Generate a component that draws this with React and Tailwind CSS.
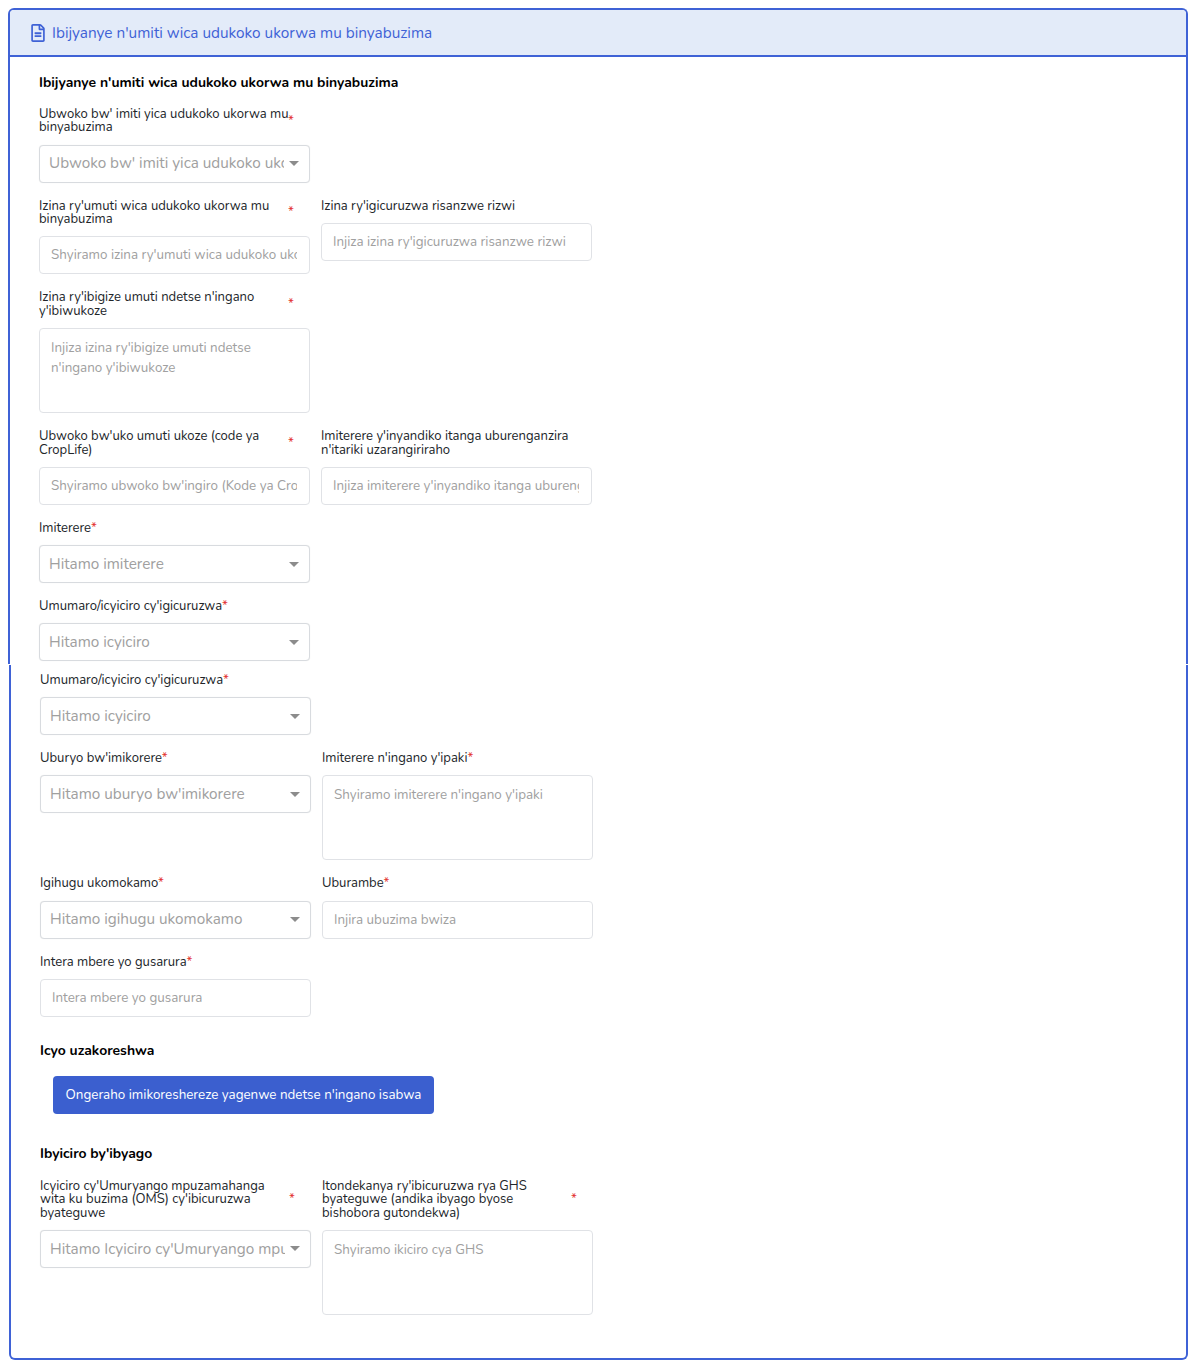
import React from "react";
import { FaRegFileAlt } from "react-icons/fa";

function Label({ text, required, inline }) {
  // short labels carry the star right after the text, long ones in a column of their own
  if (inline) {
    return (
      <div className="pt-px text-[13.05px] leading-[13.5px] text-[#212529]">
        {text}
        <span className="text-[#e3342f]">*</span>
      </div>
    );
  }
  return (
    <div className="flex items-center pt-px text-[13.05px] leading-[13.5px] text-[#212529]">
      <span className="w-[249px] whitespace-pre">{text}</span>
      {required && <span className="text-[#e3342f]">*</span>}
    </div>
  );
}

function Select({ placeholder }) {
  return (
    <div className="flex items-center h-[38px] pl-[9px] pr-[10px] bg-white border border-[#d8dbdf] rounded-[4px] shadow-[0_0_1px_rgba(0,0,0,0.1)]">
      <span className="flex-1 min-w-0 overflow-hidden whitespace-nowrap text-[15.3px] text-[#a0a0a0]">
        {placeholder}
      </span>
      <span className="ml-[5px] w-0 h-0 border-l-[5px] border-r-[5px] border-t-[5px] border-l-transparent border-r-transparent border-t-[#8c8c8c]" />
    </div>
  );
}

function Input({ placeholder }) {
  return (
    <div className="flex items-center h-[38px] pl-[11px] pr-3 bg-white border border-[#e0e2e6] rounded-[4px]">
      <span className="min-w-0 overflow-hidden whitespace-nowrap text-[13.4px] text-[#a0a0a0]">{placeholder}</span>
    </div>
  );
}

function Area({ placeholder }) {
  return (
    <div className="h-[85px] pl-[11px] pr-3 py-[9px] bg-white border border-[#e0e2e6] rounded-[4px] text-[13.4px] leading-[20px] text-[#a0a0a0]">
      {placeholder}
    </div>
  );
}

function Field({ label, required, inline, children }) {
  return (
    <div className="flex flex-col gap-[9.75px] w-[271px]">
      <Label text={label} required={required} inline={inline} />
      {children}
    </div>
  );
}

function Row({ children }) {
  return <div className="flex items-start gap-[11px] mb-4">{children}</div>;
}

export default function App() {
  return (
    <div className="w-[1202px] h-[1370px] bg-white pt-2 pl-2 font-['Nunito','Noto_Sans',sans-serif]">
      {/* top half of the card */}
      <div className="w-[1180px] h-[656px] border-t-2 border-x-2 border-[#3f62d6] rounded-t-[6px] overflow-hidden">
        <div className="flex items-center gap-[7px] h-[47px] pt-px pl-[21px] bg-[#e3ebf9] border-b-2 border-[#3f62d6] text-[#3f62d6] text-[15.35px]">
          <FaRegFileAlt className="w-[14px] h-[18px]" />
          Ibijyanye n'umiti wica udukoko ukorwa mu binyabuzima
        </div>
        <div className="pl-[29px]">
          <div className="mt-[14.5px] mb-[14.25px] text-[13.95px] leading-[21px] font-bold text-black">
            Ibijyanye n'umiti wica udukoko ukorwa mu binyabuzima
          </div>
          <Row>
            <Field label={"Ubwoko bw' imiti yica udukoko ukorwa mu\nbinyabuzima"} required>
              <Select placeholder="Ubwoko bw' imiti yica udukoko ukorwa mu binyabuzima" />
            </Field>
          </Row>
          <Row>
            <Field label={"Izina ry'umuti wica udukoko ukorwa mu\nbinyabuzima"} required>
              <Input placeholder="Shyiramo izina ry'umuti wica udukoko ukorwa mu binyabuzima" />
            </Field>
            <Field label="Izina ry'igicuruzwa risanzwe rizwi">
              <Input placeholder="Injiza izina ry'igicuruzwa risanzwe rizwi" />
            </Field>
          </Row>
          <Row>
            <Field label={"Izina ry'ibigize umuti ndetse n'ingano\ny'ibiwukoze"} required>
              <Area placeholder="Injiza izina ry'ibigize umuti ndetse n'ingano y'ibiwukoze" />
            </Field>
          </Row>
          <Row>
            <Field label={"Ubwoko bw'uko umuti ukoze (code ya\nCropLife)"} required>
              <Input placeholder="Shyiramo ubwoko bw'ingiro (Kode ya CropLife)" />
            </Field>
            <Field label={"Imiterere y'inyandiko itanga uburenganzira\nn'itariki uzarangiriraho"}>
              <Input placeholder="Injiza imiterere y'inyandiko itanga uburenganzira" />
            </Field>
          </Row>
          <Row>
            <Field label="Imiterere" inline>
              <Select placeholder="Hitamo imiterere" />
            </Field>
          </Row>
          <Row>
            <Field label="Umumaro/icyiciro cy'igicuruzwa" inline>
              <Select placeholder="Hitamo icyiciro" />
            </Field>
          </Row>
        </div>
      </div>

      {/* lower half, one pixel to the right */}
      <div className="w-[1179px] h-[695px] mt-px ml-px border-b-2 border-x-2 border-[#3f62d6] rounded-b-[6px] pl-[29px] pt-[7.95px]">
        <Row>
          <Field label="Umumaro/icyiciro cy'igicuruzwa" inline>
            <Select placeholder="Hitamo icyiciro" />
          </Field>
        </Row>
        <Row>
          <Field label="Uburyo bw'imikorere" inline>
            <Select placeholder="Hitamo uburyo bw'imikorere" />
          </Field>
          <Field label="Imiterere n'ingano y'ipaki" inline>
            <Area placeholder="Shyiramo imiterere n'ingano y'ipaki" />
          </Field>
        </Row>
        <Row>
          <Field label="Igihugu ukomokamo" inline>
            <Select placeholder="Hitamo igihugu ukomokamo" />
          </Field>
          <Field label="Uburambe" inline>
            <Input placeholder="Injira ubuzima bwiza" />
          </Field>
        </Row>
        <Field label="Intera mbere yo gusarura" inline>
          <Input placeholder="Intera mbere yo gusarura" />
        </Field>

        <div className="mt-[23.55px] text-[13.95px] leading-[21px] font-bold text-black">Icyo uzakoreshwa</div>
        <button className="block mt-[14.5px] ml-[13px] w-[381px] h-[38px] bg-[#3b5fcf] rounded-[4px] text-white text-[13.4px]">
          Ongeraho imikoreshereze yagenwe ndetse n'ingano isabwa
        </button>

        <div className="mt-[29.5px] mb-[14.25px] text-[13.95px] leading-[21px] font-bold text-black">Ibyiciro by'ibyago</div>
        <Row>
          <Field label={"Icyiciro cy'Umuryango mpuzamahanga\nwita ku buzima (OMS) cy'ibicuruzwa\nbyateguwe"} required>
            <Select placeholder="Hitamo Icyiciro cy'Umuryango mpuzamahanga" />
          </Field>
          <Field label={"Itondekanya ry'ibicuruzwa rya GHS\nbyateguwe (andika ibyago byose\nbishobora gutondekwa)"} required>
            <Area placeholder="Shyiramo ikiciro cya GHS" />
          </Field>
        </Row>
      </div>
    </div>
  );
}
